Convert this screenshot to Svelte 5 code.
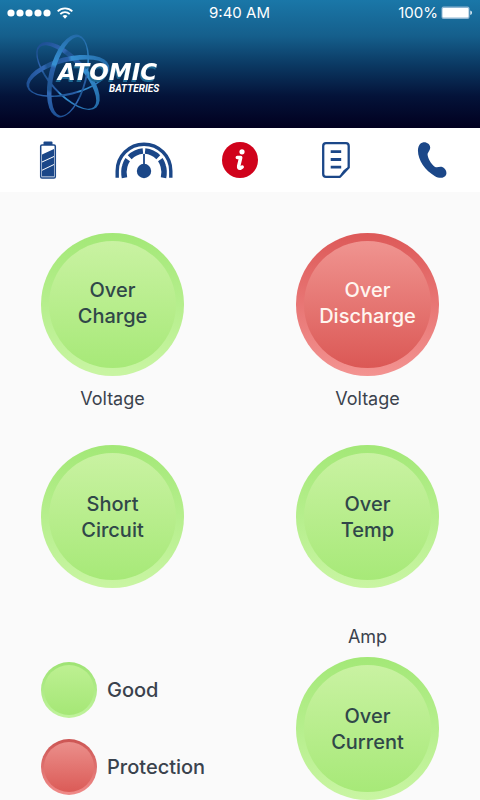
<script>
  let active = $state("alerts");

  const alarms = [
    { lines: ["Over", "Charge"], caption: "Voltage", fault: false },
    { lines: ["Over", "Discharge"], caption: "Voltage", fault: true },
    { lines: ["Short", "Circuit"], fault: false },
    { lines: ["Over", "Temp"], fault: false },
  ];

  const tabs = [
    { id: "battery", label: "Battery" },
    { id: "gauge", label: "Gauge" },
    { id: "alerts", label: "Alerts" },
    { id: "report", label: "Report" },
    { id: "phone", label: "Call" },
  ];

  const orbits = [48, -14, -76];
</script>

{#snippet lamp(item)}
  <div class="lamp" class:fault={item.fault}>
    <span>{item.lines[0]}<br />{item.lines[1]}</span>
  </div>
{/snippet}

<div class="app">
  <header>
    <div class="status">
      <div class="signal">
        <svg width="44" height="8" viewBox="0 0 44 8" fill="#fff" aria-hidden="true">
          {#each [4, 13, 22, 31, 40] as cx}
            <circle {cx} cy="4" r="3.6" />
          {/each}
        </svg>
        <svg width="16" height="12" viewBox="0 0 16 12" fill="none" stroke="#fff" stroke-width="1.9" aria-hidden="true">
          <path d="M0.7 4.4 A10.4 10.4 0 0 1 15.3 4.4" />
          <path d="M3.3 7.1 A6.7 6.7 0 0 1 12.7 7.1" />
          <path d="M8 11.7 L5.5 9.1 A3.6 3.6 0 0 1 10.5 9.1 Z" fill="#fff" stroke="none" />
        </svg>
      </div>
      <time>9:40 AM</time>
      <div class="power">
        <span>100%</span>
        <svg width="31" height="14" viewBox="0 0 31 14" aria-hidden="true">
          <rect x="0.5" y="0.5" width="28" height="12.5" rx="2" fill="#8fb6d2" />
          <rect x="1.5" y="2" width="26" height="9.5" rx="1" fill="#fff" />
          <path d="M29.3 4.5 Q31 5 31 6.8 Q31 8.6 29.3 9.1 Z" fill="#e4f0f8" />
        </svg>
      </div>
    </div>

    <svg class="logo" width="150" height="92" viewBox="0 0 150 92" role="img" aria-label="Atomic Batteries">
      <defs>
        <linearGradient id="orbit" x1="0" x2="1" y1="0" y2="0">
          <stop offset="0" stop-color="#1d4f93" />
          <stop offset="0.25" stop-color="#3168b4" />
          <stop offset="0.29" stop-color="#1e5491" />
          <stop offset="0.55" stop-color="#2a5fa8" />
          <stop offset="0.59" stop-color="#3690d2" />
          <stop offset="1" stop-color="#236aa8" />
        </linearGradient>
      </defs>
      {#each orbits as angle}
        <path
          transform="translate(48 46) rotate({angle})"
          fill="url(#orbit)"
          fill-rule="evenodd"
          d="M-42.5 0 A42.5 19 0 1 1 42.5 0 A42.5 19 0 1 1 -42.5 0 Z M-40.3 1.5 A40.3 15.6 0 1 0 40.3 1.5 A40.3 15.6 0 1 0 -40.3 1.5 Z"
        />
      {/each}
      <text class="brand" x="38" y="50">ATOMIC</text>
      <text class="sub" x="89" y="62">BATTERIES</text>
    </svg>
  </header>

  <nav>
    {#each tabs as tab}
      <button type="button" aria-label={tab.label} aria-pressed={active === tab.id} onclick={() => (active = tab.id)}>
        {#if tab.id === "battery"}
          <svg width="18" height="38" viewBox="0 0 18 38">
            <path d="M4.5 4 V1.5 Q4.5 0.5 5.5 0.5 H12.5 Q13.5 0.5 13.5 1.5 V4 Z" fill="#1b4788" />
            <rect x="1.7" y="4" width="14.6" height="33" rx="1.3" fill="#fff" stroke="#1b4788" stroke-width="1.5" />
            <path d="M3 13.5 L15 8 V15 L3 20.6 Z M3 21.6 L15 16.1 V23 L3 28.7 Z M3 29.7 L15 24.1 V35.6 H3 Z" fill="#1b4788" />
          </svg>
        {:else if tab.id === "gauge"}
          <svg width="58" height="38" viewBox="0 0 58 38" fill="none" stroke="#1b4788">
            <path d="M2.2 36.8 V30 A26.8 26.8 0 0 1 55.8 30 V36.8" stroke-width="3.4" />
            <path d="M9.5 36.8 Q8.2 30 9.8 25 Q10.7 21.5 12.7 18.6" stroke-width="5.5" />
            <path d="M14.7 16.2 Q20.2 10.8 27.9 10" stroke-width="5.5" />
            <path d="M30.1 10 Q37.8 10.8 43.3 16.2" stroke-width="5.5" />
            <path d="M45.3 18.6 Q47.3 21.5 48.2 25 Q49.8 30 48.5 36.8" stroke-width="5.5" />
            <path d="M29 13 V26" stroke-width="1.8" />
            <circle cx="29" cy="30" r="7.2" fill="#1b4788" stroke="none" />
          </svg>
        {:else if tab.id === "alerts"}
          <svg width="36" height="36" viewBox="0 0 36 36">
            <circle cx="18" cy="18" r="18" fill="#d0021b" />
            <circle cx="20" cy="9.8" r="2.6" fill="#fff" />
            <path d="M15.3 15.6 H18.7 L16.7 24 Q16.3 26.6 18.3 26.2 L20.2 25" fill="none" stroke="#fff" stroke-width="3.5" stroke-linecap="round" stroke-linejoin="round" />
          </svg>
        {:else if tab.id === "report"}
          <svg width="28" height="36" viewBox="0 0 28 36" fill="none" stroke="#1b4788">
            <path d="M4 1.2 H24 Q26.7 1.2 26.7 4 V25.5 L18 34.8 H4 Q1.2 34.8 1.2 32 V4 Q1.2 1.2 4 1.2 Z" stroke-width="2.3" stroke-linejoin="round" />
            <path d="M26.5 25.5 Q21 26.5 18 34.5 Z" fill="#1b4788" stroke="none" />
            <path d="M8.7 9.7 H19.2 M8.7 17.5 H19.2 M8.7 25.2 H19.2" stroke-width="2.8" />
          </svg>
        {:else}
          <svg width="30" height="36" viewBox="0 0 30 36">
            <path d="M1 7 Q1.6 1.5 5.7 0.4 C9.4 -0.5 13.2 2.2 13.2 5.4 C13.4 8 11.5 9.4 10.6 11.8 C10.3 15.2 13.7 21.7 17.7 24.7 C20.4 26 22.5 24.2 25.3 25.1 C28.5 26.5 30.3 30 29 33 C27.4 36.5 22 36.5 18 34.2 C7.8 28.2 0.2 17.2 1 7 Z" fill="#1b4788" />
          </svg>
        {/if}
      </button>
    {/each}
  </nav>

  <main>
    {#each alarms as item}
      <section class:captioned={item.caption}>
        {@render lamp(item)}
        {#if item.caption}
          <p>{item.caption}</p>
        {/if}
      </section>
    {/each}

    <ul>
      <li><i></i>Good</li>
      <li><i class="fault"></i>Protection</li>
    </ul>

    <section class="current">
      <p>Amp</p>
      {@render lamp({ lines: ["Over", "Current"], fault: false })}
    </section>
  </main>
</div>

<style>
  :global(body) {
    margin: 0;
    background: #fafafa;
  }

  .app {
    font-family: Inter, "Liberation Sans", sans-serif;
    color: #3a424d;
  }

  header {
    background: linear-gradient(#1a77a8 0, #155f8c 28%, #0b3a64 50%, #041339 75%, #01001f 100%);
    color: #fff;
    padding-bottom: 6px;
  }

  .status {
    display: grid;
    grid-template-columns: 1fr auto 1fr;
    align-items: center;
    height: 26px;
    padding: 0 8px 0 7px;
    font-size: 15px;
    line-height: 26px;
  }

  .signal,
  .power {
    display: flex;
    align-items: center;
    gap: 6px;
  }

  .power {
    justify-content: flex-end;
    gap: 3px;
  }

  .logo {
    display: block;
    margin: 4px 0 0 20px;
  }

  .brand {
    font: italic bold 23px "DejaVu Sans", sans-serif;
    fill: #fff;
    filter: drop-shadow(-1px 2px 0 #1d6792);
  }

  .sub {
    font: italic bold 10px Roboto, sans-serif;
    fill: #fff;
  }

  nav {
    display: grid;
    grid-template-columns: repeat(5, 1fr);
    height: 64px;
    background: #fff;
  }

  button {
    display: flex;
    align-items: center;
    justify-content: center;
    padding: 0;
    border: none;
    background: none;
    cursor: pointer;
  }

  main {
    display: grid;
    grid-template-columns: auto auto;
    justify-content: space-between;
    padding: 41px 41px 0;
  }

  .captioned {
    height: 212px;
  }

  .lamp {
    display: flex;
    align-items: center;
    justify-content: center;
    box-sizing: border-box;
    width: 143px;
    height: 143px;
    border: 8px solid transparent;
    border-radius: 50%;
    background:
      linear-gradient(#c9f2a2, #a7e978) padding-box,
      linear-gradient(#a3e877, #c9f5a3) border-box;
    color: #304749;
    font-size: 20px;
    font-weight: 500;
    line-height: 26px;
    text-align: center;
  }

  .captioned .lamp {
    padding-bottom: 3px;
  }

  .lamp.fault {
    background:
      linear-gradient(#f09490, #db5855) padding-box,
      linear-gradient(#dd5958, #f39391) border-box;
    color: #fff5ef;
  }

  p {
    margin: 0;
    padding-top: 10px;
    font-size: 18px;
    line-height: 26px;
    text-align: center;
  }

  .current p {
    padding: 36px 0 7px;
  }

  ul {
    display: flex;
    flex-direction: column;
    gap: 21px;
    width: 143px;
    margin: 0;
    padding: 74px 0 0;
    list-style: none;
  }

  li {
    display: flex;
    align-items: center;
    gap: 10px;
    font-size: 20px;
    font-weight: 500;
  }

  i {
    flex: none;
    box-sizing: border-box;
    width: 56px;
    height: 56px;
    border: 3px solid transparent;
    border-radius: 50%;
    background:
      linear-gradient(#bdf092, #a5e776) padding-box,
      linear-gradient(#9ee373, #c0f39c) border-box;
  }

  i.fault {
    background:
      linear-gradient(#eb8f8b, #db5b57) padding-box,
      linear-gradient(#cc5553, #f08b89) border-box;
  }
</style>
